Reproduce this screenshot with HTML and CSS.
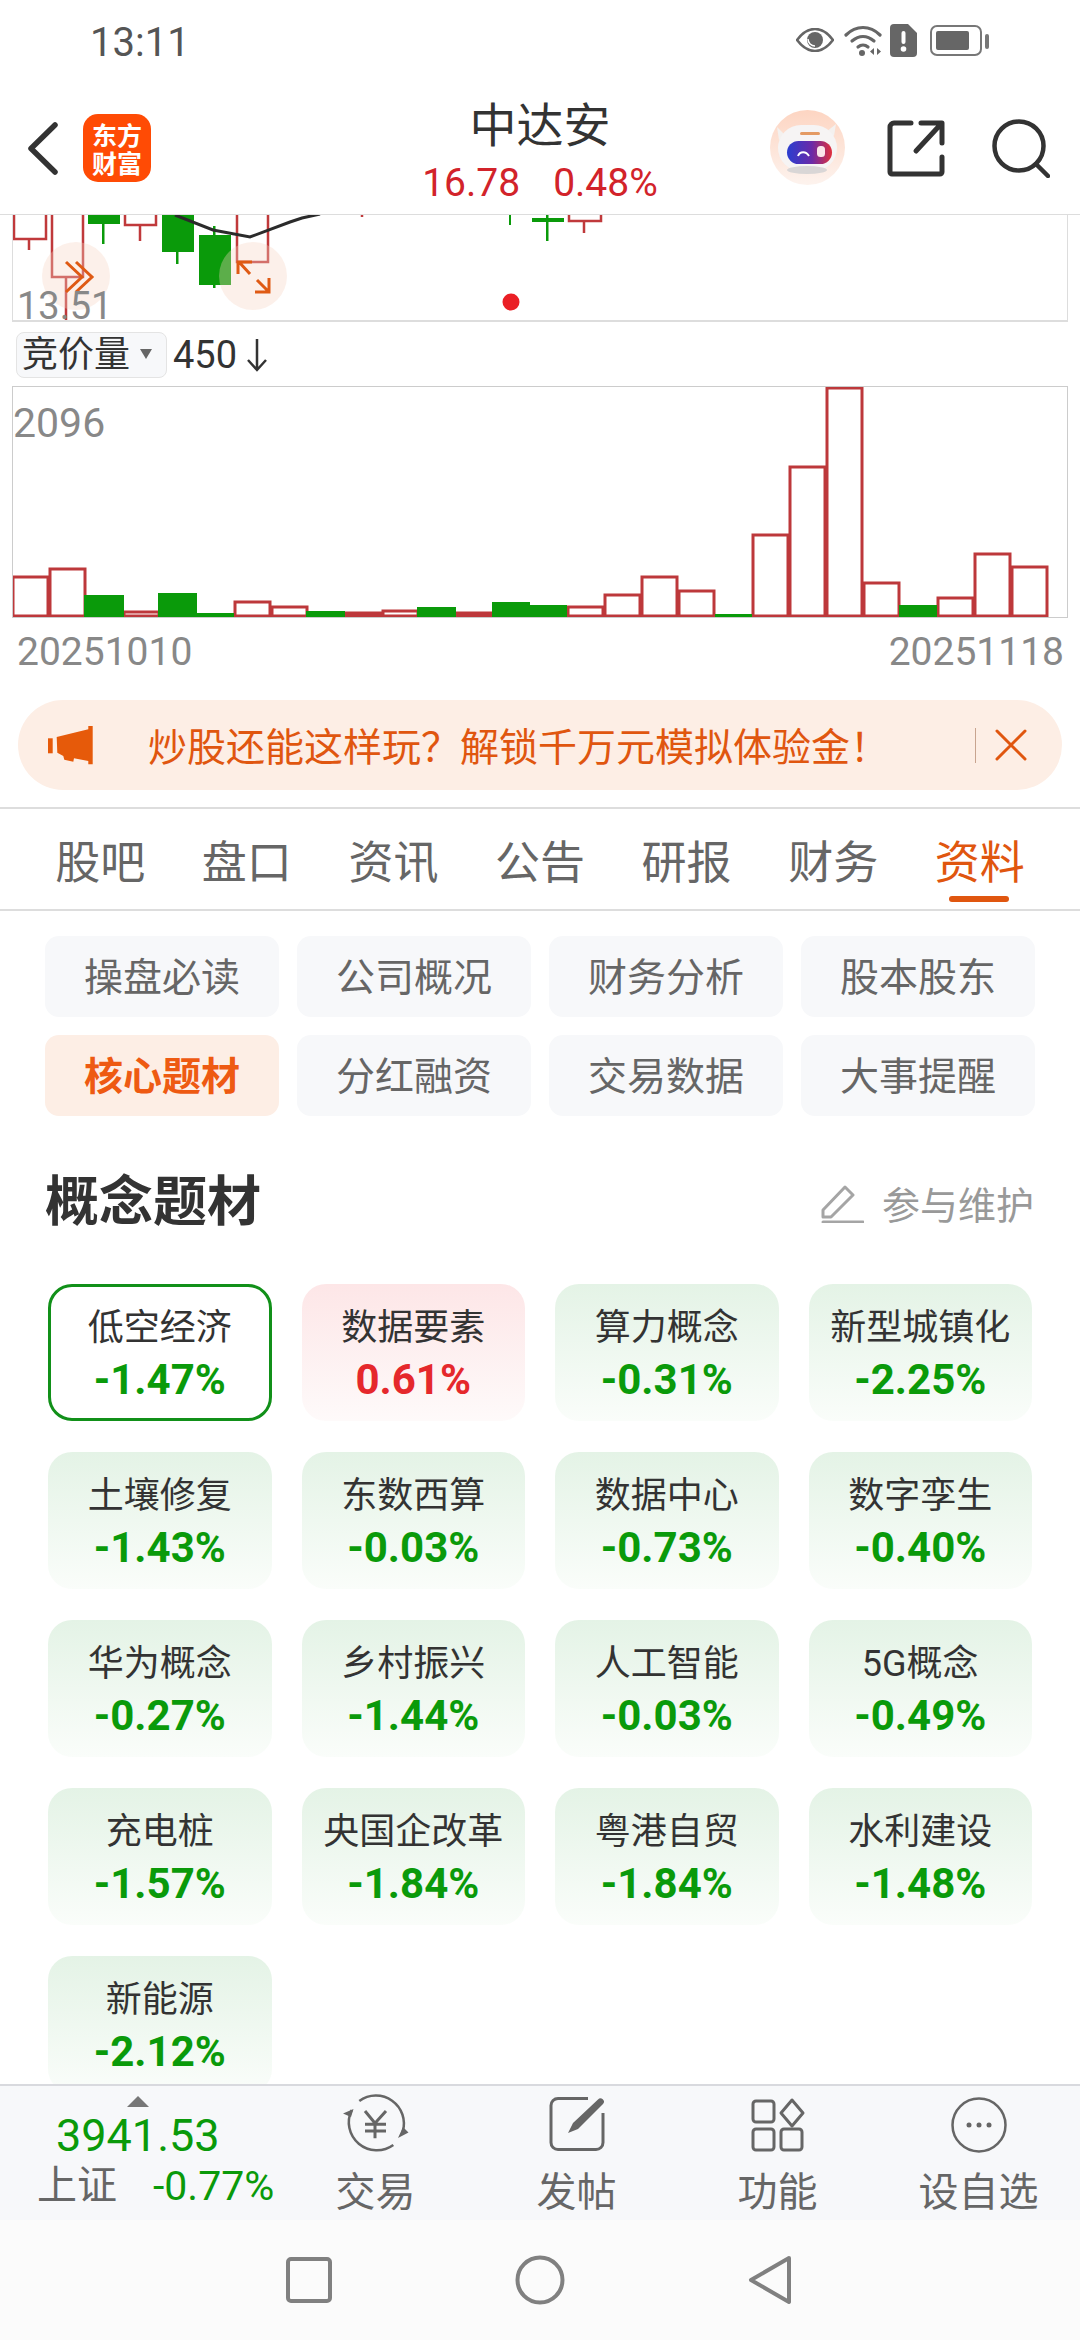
FILE: index.html
```html
<!DOCTYPE html>
<html lang="zh-CN">
<head>
<meta charset="utf-8">
<title>中达安</title>
<link rel="stylesheet" href="styles.css">
</head>
<body>
<div class="phone">
  <div class="status">
    <span class="time">13:11</span>
    <div class="status-icons">
      <svg class="si-eye" viewBox="0 0 38 24"><path d="M1 12C7 4 13 1 19 1s12 3 18 11c-6 8-12 11-18 11S7 20 1 12z" fill="none" stroke="#666" stroke-width="2.600"/><circle cx="19" cy="12" r="8" fill="#666"/><path d="M12 11a7 7 0 0 0 7 7" stroke="#fff" stroke-width="1.500" fill="none"/></svg>
      <svg class="si-wifi" viewBox="0 0 38 31"><g fill="none" stroke="#666" stroke-width="3.200" stroke-linecap="round"><path d="M2 10C12 0 26 0 36 10"/><path d="M8 16c7-6 15-6 22 0"/><path d="M14 22c3-2.500 7-2.500 10 0"/></g><circle cx="18" cy="28" r="3" fill="#666"/><path d="M30 23v7l-4-3.500zM33 23v7l4-3.500z" fill="#666"/></svg>
      <svg class="si-sim" viewBox="0 0 27 33"><path d="M4 0h14l9 9v20a4 4 0 0 1-4 4H4a4 4 0 0 1-4-4V4a4 4 0 0 1 4-4z" fill="#666"/><rect x="11.500" y="7" width="4" height="13" rx="2" fill="#fff"/><circle cx="13.500" cy="25" r="2.800" fill="#fff"/></svg>
      <svg class="si-bat" viewBox="0 0 59 31"><rect x="1" y="1" width="50" height="29" rx="6" fill="none" stroke="#777" stroke-width="2"/><rect x="6" y="6" width="33" height="19" rx="2" fill="#666"/><rect x="55" y="9" width="4" height="15" rx="2" fill="#777"/></svg>
    </div>
  </div>

  <header class="topbar">
    <svg class="back" viewBox="0 0 31 53"><path d="M28 3L4 26.500 28 50" fill="none" stroke="#333" stroke-width="5.500" stroke-linecap="round" stroke-linejoin="round"/></svg>
    <div class="logo">东方财富</div>
    <div class="title">
      <div class="name">中达安</div>
      <div class="quote"><span>16.78</span><span>0.48%</span></div>
    </div>
    <svg class="avatar" viewBox="0 0 75 75">
      <defs>
        <linearGradient id="av-bg" x1="0" y1="0" x2="0" y2="1"><stop offset="0" stop-color="#fdd5c2"/><stop offset="1" stop-color="#fdf3ee"/></linearGradient>
        <linearGradient id="av-visor" x1="0" y1="0" x2="1" y2="0"><stop offset="0" stop-color="#2a3ed0"/><stop offset=".55" stop-color="#6a2aa8"/><stop offset="1" stop-color="#e0303c"/></linearGradient>
      </defs>
      <circle cx="37.500" cy="37.500" r="37.500" fill="url(#av-bg)"/>
      <path d="M7 17l8 8-6 5zM66 14l-2 12-8-4z" fill="#f4f1ef"/>
      <rect x="8" y="15" width="59" height="46" rx="23" fill="#f6f4f4"/>
      <ellipse cx="37" cy="60" rx="20" ry="4" fill="#d9d6d6"/>
      <rect x="30" y="22" width="20" height="3" rx="1.500" fill="#e49a63"/>
      <rect x="17" y="31" width="45" height="23" rx="11.500" fill="url(#av-visor)"/>
      <path d="M28 46c2-5 8-5 11 0" fill="none" stroke="#fff" stroke-width="2"/>
      <rect x="47" y="36" width="8" height="11" rx="3.500" fill="#fbe6ea"/>
    </svg>
    <svg class="share" viewBox="0 0 58 57"><path d="M24 3H7a4 4 0 0 0-4 4v45a2 2 0 0 0 2 2h48a2 2 0 0 0 2-2V37M29 31L54 4M34 3h21v20" fill="none" stroke="#333" stroke-width="5" stroke-linecap="round" stroke-linejoin="round"/></svg>
    <svg class="search" viewBox="0 0 58 59"><circle cx="27" cy="27" r="24.500" fill="none" stroke="#333" stroke-width="4.500"/><path d="M44 45l12 12" stroke="#333" stroke-width="4.500" stroke-linecap="round"/></svg>
  </header>

  <main class="scroll">
    <div class="kchart">
      <svg viewBox="13 215 1054 105" class="fill-svg">
        <g fill="none" stroke="#c0393b" stroke-width="2.500">
          <path d="M14 215v24h32v-24M29 239v11"/>
          <path d="M52 215v62h31v-62M66 277v45"/>
          <path d="M125 215v10h31v-10M140 225v16"/>
          <path d="M237 215v47h31v-47"/>
          <path d="M569 215v6h32v-6M584 221v12"/>
          <path d="M362 215v2"/>
        </g>
        <g fill="#0a9a0a">
          <rect x="88" y="215" width="32" height="9"/><rect x="102" y="224" width="2.500" height="20"/>
          <rect x="162" y="215" width="32" height="37"/><rect x="176" y="252" width="2.500" height="12"/>
          <rect x="199" y="235" width="32" height="50"/><rect x="213" y="226" width="2.500" height="62"/>
          <rect x="509" y="215" width="2" height="10"/>
          <rect x="532" y="218" width="32" height="4"/><rect x="546" y="215" width="2.500" height="26"/>
        </g>
        <path d="M175 215l38 15 37 7 40-15 12-4 18-4" fill="none" stroke="#2b2b2b" stroke-width="3"/>
        <circle cx="76" cy="276" r="34" fill="#f6d5c2" fill-opacity=".35"/>
        <circle cx="253" cy="276" r="34" fill="#f6d5c2" fill-opacity=".35"/>
        <g fill="none" stroke="#df5a14" stroke-width="3">
          <path d="M66 262l16 15-16 15M76 262l16 15-16 15"/>
          <path d="M238 274v-12h14M239 262l11 12M257 280l12 12M255 292h14v-14"/>
        </g>
        <circle cx="511" cy="302" r="8.500" fill="#ea1f25"/>
      </svg>
      <span class="low">13.51</span>
    </div>

    <div class="vol-head">
      <div class="select"><span>竞价量</span><i class="caret"></i></div>
      <span class="vol-val">450</span>
      <svg class="down" viewBox="0 0 24 34"><path d="M12 1v31M3 22l9 10 9-10" fill="none" stroke="#333" stroke-width="2.500"/></svg>
    </div>

    <div class="volchart">
      <svg viewBox="13 387 1054 230" class="fill-svg">
        <g fill="#fff" stroke="#bd383b" stroke-width="3">
          <rect x="13" y="577" width="35" height="39"/>
          <rect x="50" y="569" width="35" height="47"/>
          <rect x="124" y="612" width="35" height="4"/>
          <rect x="235" y="602" width="35" height="14"/>
          <rect x="272" y="607" width="35" height="9"/>
          <rect x="346" y="613" width="35" height="3"/>
          <rect x="383" y="611" width="35" height="5"/>
          <rect x="457" y="613" width="35" height="3"/>
          <rect x="568" y="607" width="35" height="9"/>
          <rect x="605" y="595" width="35" height="21"/>
          <rect x="642" y="577" width="35" height="39"/>
          <rect x="679" y="591" width="35" height="25"/>
          <rect x="753" y="535" width="35" height="81"/>
          <rect x="790" y="467" width="35" height="149"/>
          <rect x="827" y="388" width="35" height="228"/>
          <rect x="864" y="583" width="35" height="33"/>
          <rect x="938" y="598" width="35" height="18"/>
          <rect x="975" y="554" width="35" height="62"/>
          <rect x="1012" y="567" width="35" height="49"/>
        </g>
        <g fill="#0a9a0a">
          <rect x="84" y="595" width="40" height="23"/>
          <rect x="158" y="593" width="39" height="24"/>
          <rect x="197" y="613" width="37" height="4"/>
          <rect x="306" y="611" width="39" height="6"/>
          <rect x="417" y="607" width="39" height="10"/>
          <rect x="492" y="602" width="38" height="15"/>
          <rect x="530" y="605" width="37" height="12"/>
          <rect x="715" y="614" width="37" height="3"/>
          <rect x="899" y="605" width="38" height="12"/>
        </g>
      </svg>
      <span class="max">2096</span>
    </div>

    <div class="dates"><span>20251010</span><span>20251118</span></div>

    <div class="notice">
      <svg class="horn" viewBox="0 0 45 39"><path d="M8.700 11L40.300 3.300V0h4.400v38.300h-4.400V35L26 32.300l-.7 3.400-9-2-1-3.700-6-3.300z" fill="#e65a0a"/><rect x="0" y="12.300" width="4.700" height="15" fill="#e65a0a"/></svg>
      <span class="notice-text">炒股还能这样玩&#xFF1F;解锁千万元模拟体验金&#xFF01;</span>
      <i class="notice-sep"></i>
      <svg class="notice-x" viewBox="0 0 32 32"><path d="M2 2l28 28M30 2L2 30" stroke="#e0560f" stroke-width="3" stroke-linecap="round"/></svg>
    </div>

    <nav class="tabs">
      <span>股吧</span><span>盘口</span><span>资讯</span><span>公告</span><span>研报</span><span>财务</span><span class="on">资料</span>
    </nav>

    <div class="chips">
      <span>操盘必读</span><span>公司概况</span><span>财务分析</span><span>股本股东</span>
      <span class="on">核心题材</span><span>分红融资</span><span>交易数据</span><span>大事提醒</span>
    </div>

    <div class="sec-head">
      <h2>概念题材</h2>
      <div class="maintain">
        <svg viewBox="0 0 44 40"><path d="M3 27L25 4l8 8-22 22H3zM3 39h40" fill="none" stroke="#a5a5a5" stroke-width="3" stroke-linejoin="round" stroke-linecap="round"/></svg>
        <span>参与维护</span>
      </div>
    </div>

    <div class="cards">
      <div class="card selected"><b>低空经济</b><em>-1.47%</em></div>
      <div class="card up"><b>数据要素</b><em>0.61%</em></div>
      <div class="card"><b>算力概念</b><em>-0.31%</em></div>
      <div class="card"><b>新型城镇化</b><em>-2.25%</em></div>
      <div class="card"><b>土壤修复</b><em>-1.43%</em></div>
      <div class="card"><b>东数西算</b><em>-0.03%</em></div>
      <div class="card"><b>数据中心</b><em>-0.73%</em></div>
      <div class="card"><b>数字孪生</b><em>-0.40%</em></div>
      <div class="card"><b>华为概念</b><em>-0.27%</em></div>
      <div class="card"><b>乡村振兴</b><em>-1.44%</em></div>
      <div class="card"><b>人工智能</b><em>-0.03%</em></div>
      <div class="card"><b>5G概念</b><em>-0.49%</em></div>
      <div class="card"><b>充电桩</b><em>-1.57%</em></div>
      <div class="card"><b>央国企改革</b><em>-1.84%</em></div>
      <div class="card"><b>粤港自贸</b><em>-1.84%</em></div>
      <div class="card"><b>水利建设</b><em>-1.48%</em></div>
      <div class="card"><b>新能源</b><em>-2.12%</em></div>
    </div>
  </main>

  <footer class="dock">
    <div class="index">
      <i class="index-up"></i>
      <div class="index-val">3941.53</div>
      <div class="index-row"><span class="index-name">上证</span><span class="index-pct">-0.77%</span></div>
    </div>
    <div class="dock-item">
      <svg viewBox="0 0 66 56"><g fill="none" stroke="#666" stroke-width="2.500"><path d="M16.300 4A28 28 0 0 1 59.700 34.700"/><path d="M50.300 48A28 28 0 0 1 8.700 13"/><path d="M22 14l10 12.300L43 14M22 27.300h21M22 34h21M32 26.300v15" stroke-width="3"/></g><path d="M55 41l10.500-5.500L60 30zM0 16.500L10.500 12 8 20z" fill="#666"/></svg>
      <span>交易</span>
    </div>
    <div class="dock-item">
      <svg viewBox="0 0 66 56"><path d="M44 1.500H14a7 7 0 0 0-7 7v37a7 7 0 0 0 7 7h38a7 7 0 0 0 7-7V16" fill="none" stroke="#666" stroke-width="3"/><path d="M24 36l5-10L54 2.500a3 3 0 0 1 5 4.500L34 32z" fill="#666"/></svg>
      <span>发帖</span>
    </div>
    <div class="dock-item">
      <svg viewBox="-1 -1 56 56"><g fill="none" stroke="#666" stroke-width="3"><rect x="2" y="3" width="21" height="21" rx="3"/><path d="M41 2l11 13-11 13-11-13z" stroke-linejoin="round"/><rect x="2" y="31" width="21" height="21" rx="3"/><rect x="30" y="31" width="21" height="21" rx="3"/></g></svg>
      <span>功能</span>
    </div>
    <div class="dock-item">
      <svg viewBox="0 0 56 56"><circle cx="28" cy="28" r="26.500" fill="none" stroke="#666" stroke-width="2.500"/><circle cx="18" cy="28" r="2.500" fill="#666"/><circle cx="28" cy="28" r="2.500" fill="#666"/><circle cx="38" cy="28" r="2.500" fill="#666"/></svg>
      <span>设自选</span>
    </div>
  </footer>

  <div class="navbar">
    <svg class="nav-square" viewBox="0 0 46 46"><rect x="2" y="2" width="42" height="42" rx="3" fill="none" stroke="#808080" stroke-width="4"/></svg>
    <svg class="nav-circle" viewBox="0 0 50 50"><circle cx="25" cy="25" r="22.500" fill="none" stroke="#808080" stroke-width="4"/></svg>
    <svg class="nav-back" viewBox="0 0 44 50"><path d="M41 3L3 25l38 22z" fill="none" stroke="#808080" stroke-width="4" stroke-linejoin="round"/></svg>
  </div>
</div>
</body>
</html>
```

FILE: styles.css
```css
* { box-sizing: border-box; }
html, body { margin: 0; padding: 0; background: #fff; }
body { font-family: "Roboto", "Noto Sans CJK SC", sans-serif; color: #333; }
.phone { width: 1080px; height: 2340px; display: flex; flex-direction: column; overflow: hidden; background: #fff; }

.status { height: 85px; flex: none; display: flex; align-items: flex-start; justify-content: space-between; padding: 0 91px 0 90px; }
.time { font-size: 40px; line-height: 40px; margin-top: 23px; color: #555; }
.status-icons { display: flex; align-items: flex-start; margin-top: 24px; }
.si-eye { width: 38px; height: 24px; margin-top: 4px; }
.si-wifi { width: 38px; height: 31px; margin-left: 10px; margin-top: 1px; }
.si-sim { width: 27px; height: 33px; margin-left: 8px; }
.si-bat { width: 59px; height: 31px; margin-left: 13px; margin-top: 1px; }

.topbar { height: 130px; flex: none; display: flex; align-items: center; position: relative; padding-left: 27px; border-bottom: 1px solid #ddd; }
.back { width: 31px; height: 53px; margin-top: -2px; }
.logo { width: 68px; height: 68px; margin-left: 25px; margin-top: -3px; padding: 6px 9px 0; border-radius: 15px; background: #ff4b05; color: #fff; text-align: center; font-size: 25px; line-height: 28px; font-weight: 700; font-family: "Noto Sans CJK SC", sans-serif; }
.title { position: absolute; left: 340px; width: 400px; top: 16px; text-align: center; }
.name { font-size: 47px; line-height: 50px; color: #333; }
.quote { display: flex; justify-content: center; gap: 33px; font-size: 39px; line-height: 44px; margin-top: 10px; color: #d2232a; }
.avatar { width: 75px; height: 75px; margin-left: auto; margin-top: -4px; }
.share { width: 58px; height: 57px; margin-left: 42px; margin-top: -2px; }
.search { width: 58px; height: 59px; margin-left: 47px; margin-right: 30px; margin-top: -2px; }

.scroll { flex: 1; min-height: 0; overflow: hidden; }
.fill-svg { display: block; width: 100%; height: 100%; }

.kchart { height: 107px; margin: 0 12px; border: 1px solid #ddd; border-top: 0; border-bottom-width: 2px; position: relative; }
.low { position: absolute; left: 4px; bottom: -7px; font-size: 38px; line-height: 42px; color: #888; }

.vol-head { height: 64px; display: flex; align-items: flex-start; padding: 10px 0 0 16px; }
.select { width: 151px; height: 46px; border: 1px solid #e4e4e4; border-radius: 8px; background: #f7f8fa; display: flex; align-items: center; padding-left: 5px; font-size: 36px; line-height: 44px; color: #333; }
.caret { width: 0; height: 0; margin-left: 10px; margin-top: -3px; border-left: 6px solid transparent; border-right: 6px solid transparent; border-top: 10px solid #666; }
.vol-val { font-size: 38px; line-height: 46px; margin-left: 6px; color: #333; }
.down { width: 24px; height: 34px; margin: 6px 0 0 8px; }

.volchart { height: 232px; margin: 0 12px; border: 1px solid #ccc; position: relative; }
.max { position: absolute; left: 0; top: 14px; font-size: 41px; line-height: 44px; color: #888; }

.dates { height: 82px; display: flex; justify-content: space-between; align-items: flex-start; padding: 12px 16px 0 17px; font-size: 39px; line-height: 44px; color: #888; }

.notice { height: 90px; margin: 0 18px; border-radius: 45px; background: #fdeee5; display: flex; align-items: center; padding-left: 30px; position: relative; }
.horn { width: 45px; height: 39px; flex: none; }
.notice-text { margin-left: 55px; margin-top: -3px; font-size: 39px; line-height: 44px; color: #e0560f; white-space: nowrap; width: 827px; font-family: "Noto Sans CJK SC", sans-serif; }
.notice-sep { width: 1px; height: 35px; background: #c8a48f; flex: none; }
.notice-x { width: 32px; height: 32px; margin-left: 19px; flex: none; }

.tabs { height: 104px; margin-top: 17px; border-top: 2px solid #ddd; border-bottom: 2px solid #ddd; display: grid; grid-template-columns: repeat(7, 1fr); padding: 0 27px; align-items: center; font-size: 45px; line-height: 50px; color: #666; text-align: center; }
.tabs span { position: relative; margin-top: 10px; }
.tabs .on { color: #e0560f; }
.tabs .on::after { content: ""; position: absolute; left: 43px; width: 60px; height: 6px; border-radius: 3px; background: #e0560f; top: 57px; }

.chips { display: grid; grid-template-columns: repeat(4, 234px); gap: 18px; padding: 25px 0 0 45px; }
.chips span { height: 81px; padding-bottom: 6px; border-radius: 14px; background: #f7f8fa; display: flex; align-items: center; justify-content: center; font-size: 39px; color: #666; }
.chips .on { background: #fdeee5; color: #ee5a12; font-weight: 700; }

.sec-head { display: flex; align-items: center; justify-content: space-between; height: 62px; margin-top: 56px; padding: 0 46px 0 45px; }
h2 { margin: 0; font-size: 54px; line-height: 62px; font-weight: 700; color: #333; }
.maintain { display: flex; align-items: center; color: #999; font-size: 38px; margin-top: -1px; }
.maintain svg { width: 44px; height: 40px; margin-right: 18px; }

.cards { display: grid; grid-template-columns: repeat(4, 223.5px); gap: 31px 30px; padding: 50px 0 0 48px; }
.card { height: 137px; border-radius: 24px; background: linear-gradient(#e4f3e6, #fafdfa); display: flex; flex-direction: column; align-items: center; }
.card b { font-weight: 400; font-size: 36px; line-height: 40px; margin-top: 24px; color: #333; white-space: nowrap; }
.card em { font-style: normal; font-weight: 700; font-size: 42px; line-height: 44px; margin-top: 10px; color: #0a9a0a; }
.card.up { background: linear-gradient(#fde6e7, #fefafa); }
.card.up em { color: #e5282c; }
.card.selected { background: #fff; border: 3px solid #119019; }
.card.selected b { margin-top: 21px; }

.dock { height: 136px; flex: none; display: flex; background: #f7f8fa; border-top: 2px solid #d8d9de; }
.index { width: 275px; flex: none; position: relative; padding-left: 37px; }
.index-up { position: absolute; left: 127px; top: 10px; width: 0; height: 0; border-left: 11px solid transparent; border-right: 11px solid transparent; border-bottom: 11px solid #777; }
.index-val { font-size: 45px; line-height: 50px; color: #0a9a0a; margin-left: 19px; margin-top: 25px; }
.index-row { display: flex; align-items: center; margin-top: 0; height: 50px; }
.index-name { font-size: 40px; line-height: 50px; color: #666; width: 116px; }
.index-pct { font-size: 41px; line-height: 44px; color: #0a9a0a; }
.dock-item { width: 201px; flex: none; display: flex; flex-direction: column; align-items: center; color: #666; font-size: 40px; line-height: 44px; }
.dock-item svg { height: 56px; width: 66px; margin-top: 11px; overflow: visible; }
.dock-item span { margin-top: 18px; }

.navbar { height: 120px; flex: none; background: #fbfbfb; position: relative; display: flex; align-items: center; padding-left: 286px; }
.nav-square { width: 46px; height: 46px; }
.nav-circle { width: 50px; height: 50px; margin-left: 183px; }
.nav-back { width: 44px; height: 50px; margin-left: 183px; }
```
